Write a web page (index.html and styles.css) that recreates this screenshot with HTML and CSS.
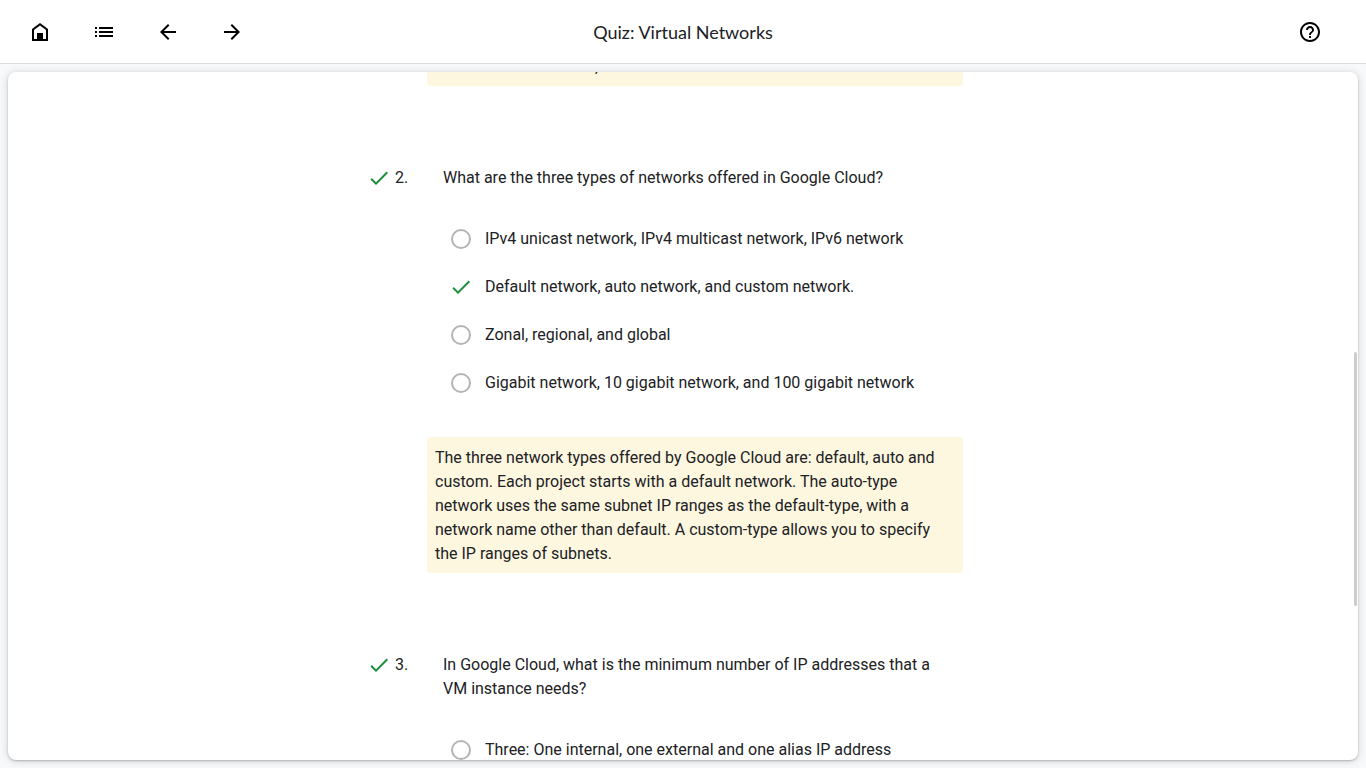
FILE: index.html
```html
<!DOCTYPE html>
<html lang="en">
<head>
<meta charset="utf-8">
<meta name="viewport" content="width=device-width, initial-scale=1">
<title>Quiz: Virtual Networks</title>
<link rel="stylesheet" href="styles.css">
</head>
<body>
<header class="topbar">
  <nav class="topbar-nav" aria-label="Course">
    <button class="icon-button" type="button" aria-label="Home"><svg class="icon" viewBox="0 0 24 24"><path d="M6 19h12v-9l-6-4.500L6 10v9zm-2 2V9l8-6 8 6v12H4zM9 13h6v7H9z"/></svg></button>
    <button class="icon-button" type="button" aria-label="Outline"><svg class="icon" viewBox="0 0 24 24"><path d="M3 7h2v2H3zm4 0h14v2H7zm-4 4h2v2H3zm4 0h14v2H7zm-4 4h2v2H3zm4 0h14v2H7z"/></svg></button>
    <button class="icon-button" type="button" aria-label="Previous"><svg class="icon" viewBox="0 0 24 24"><path d="M20 11H7.830l5.590-5.590L12 4l-8 8 8 8 1.410-1.410L7.830 13H20z"/></svg></button>
    <button class="icon-button" type="button" aria-label="Next"><svg class="icon" viewBox="0 0 24 24"><path d="M12 4l-1.410 1.410L16.170 11H4v2h12.170l-5.580 5.590L12 20l8-8z"/></svg></button>
  </nav>
  <h1 class="topbar-title">Quiz: Virtual Networks</h1>
  <div class="topbar-end">
    <button class="icon-button" type="button" aria-label="Help"><svg class="icon" viewBox="0 0 24 24"><path d="M11 18h2v-2h-2v2zm1-16C6.480 2 2 6.480 2 12s4.480 10 10 10 10-4.480 10-10S17.520 2 12 2zm0 18c-4.410 0-8-3.590-8-8s3.590-8 8-8 8 3.590 8 8-3.590 8-8 8zm0-14c-2.210 0-4 1.790-4 4h2c0-1.100.9-2 2-2s2 .9 2 2c0 2-3 1.750-3 5h2c0-2.250 3-2.500 3-5 0-2.210-1.790-4-4-4z"/></svg></button>
  </div>
</header>
<main class="stage">
  <div class="card">
    <div class="quiz">
      <p class="feedback feedback-previous">,</p>

      <section class="question">
        <div class="question-head">
          <svg class="icon icon-check" viewBox="0 0 24 24" role="img" aria-label="Correct"><path d="M9 16.170L4.830 12l-1.420 1.410L9 19 21 7l-1.410-1.410z"/></svg>
          <span class="question-number">2.</span>
          <h2 class="question-text" id="q2">What are the three types of networks offered in Google Cloud?</h2>
        </div>
        <div class="options" role="radiogroup" aria-labelledby="q2">
          <label class="option"><span class="option-mark"><input class="radio" type="radio" name="q2"></span>IPv4 unicast network, IPv4 multicast network, IPv6 network</label>
          <label class="option"><span class="option-mark"><input class="radio radio-correct" type="radio" name="q2" checked><svg class="icon icon-check" viewBox="0 0 24 24" aria-hidden="true"><path d="M9 16.170L4.830 12l-1.420 1.410L9 19 21 7l-1.410-1.410z"/></svg></span>Default network, auto network, and custom network.</label>
          <label class="option"><span class="option-mark"><input class="radio" type="radio" name="q2"></span>Zonal, regional, and global</label>
          <label class="option"><span class="option-mark"><input class="radio" type="radio" name="q2"></span>Gigabit network, 10 gigabit network, and 100 gigabit network</label>
        </div>
        <p class="feedback">The three network types offered by Google Cloud are: default, auto and custom. Each project starts with a default network. The auto-type network uses the same subnet IP ranges as the default-type, with a network name other than default. A custom-type allows you to specify the IP ranges of subnets.</p>
      </section>

      <section class="question">
        <div class="question-head">
          <svg class="icon icon-check" viewBox="0 0 24 24" role="img" aria-label="Correct"><path d="M9 16.170L4.830 12l-1.420 1.410L9 19 21 7l-1.410-1.410z"/></svg>
          <span class="question-number">3.</span>
          <h2 class="question-text" id="q3">In Google Cloud, what is the minimum number of IP addresses that a VM instance needs?</h2>
        </div>
        <div class="options" role="radiogroup" aria-labelledby="q3">
          <label class="option"><span class="option-mark"><input class="radio" type="radio" name="q3"></span>Three: One internal, one external and one alias IP address</label>
        </div>
      </section>
    </div>
    <div class="scroll-thumb"></div>
  </div>
</main>
</body>
</html>
```
FILE: styles.css
```css
* {
  box-sizing: border-box;
}

body {
  margin: 0;
  height: 100vh;
  display: flex;
  flex-direction: column;
  overflow: hidden;
  background: #f8f9fa;
  color: #202124;
  font: 16px/24px Roboto, "Liberation Sans", sans-serif;
}

h1, h2, p {
  margin: 0;
  font-size: 16px;
  font-weight: 400;
}

.topbar {
  flex: none;
  display: grid;
  grid-template-columns: 1fr auto 1fr;
  align-items: center;
  height: 64px;
  padding: 0 32px 0 16px;
  background: #fff;
  border-bottom: 1px solid #dadce0;
}

.topbar-nav {
  display: flex;
  gap: 16px;
}

.topbar-title {
  padding-left: 16px;
  font: 18px/24px Lato, "Open Sans", sans-serif;
}

.topbar-end {
  display: flex;
  justify-content: flex-end;
}

.icon-button {
  display: grid;
  place-items: center;
  width: 48px;
  height: 48px;
  padding: 0;
  border: 0;
  border-radius: 50%;
  background: none;
  color: #000;
  cursor: pointer;
}

.icon {
  display: block;
  flex: none;
  width: 24px;
  height: 24px;
  fill: currentColor;
}

.icon-check {
  color: #1e8e3e;
}

.stage {
  flex: 1;
  min-height: 0;
  padding: 8px;
}

.card {
  position: relative;
  height: 100%;
  overflow: hidden;
  border-radius: 8px;
  background: #fff;
  box-shadow: 0 1px 2px rgba(60, 64, 67, 0.3), 0 1px 8px rgba(60, 64, 67, 0.2);
}

.quiz {
  display: flex;
  flex-direction: column;
  gap: 80px;
  max-width: 632px;
  margin: 0 auto;
  padding-right: 36px;
}

.feedback {
  margin-left: 60px;
  padding: 9px 8px 7px;
  border-radius: 4px;
  background: #fef7e0;
}

/* The quiz is scrolled so that only the end of the first feedback shows. */
.feedback-previous {
  margin-top: -26px;
  text-indent: 160px;
}

.question-head {
  display: grid;
  grid-template-columns: 24px 44px 1fr;
  column-gap: 4px;
  padding-right: 8px;
}

.options {
  padding: 25px 0 30px 82px;
}

.option {
  display: flex;
  align-items: center;
  gap: 12px;
  height: 48px;
  cursor: pointer;
}

.option-mark {
  position: relative;
  display: grid;
  place-items: center;
  width: 24px;
  height: 24px;
}

.radio {
  appearance: none;
  width: 20px;
  height: 20px;
  margin: 0;
  border: 2px solid #b4b4b4;
  border-radius: 50%;
  background: #fff;
}

.radio-correct {
  position: absolute;
  opacity: 0;
}

.scroll-thumb {
  position: absolute;
  top: 280px;
  right: 1px;
  width: 3px;
  height: 254px;
  border-radius: 2px;
  background: #ccc;
}
```
